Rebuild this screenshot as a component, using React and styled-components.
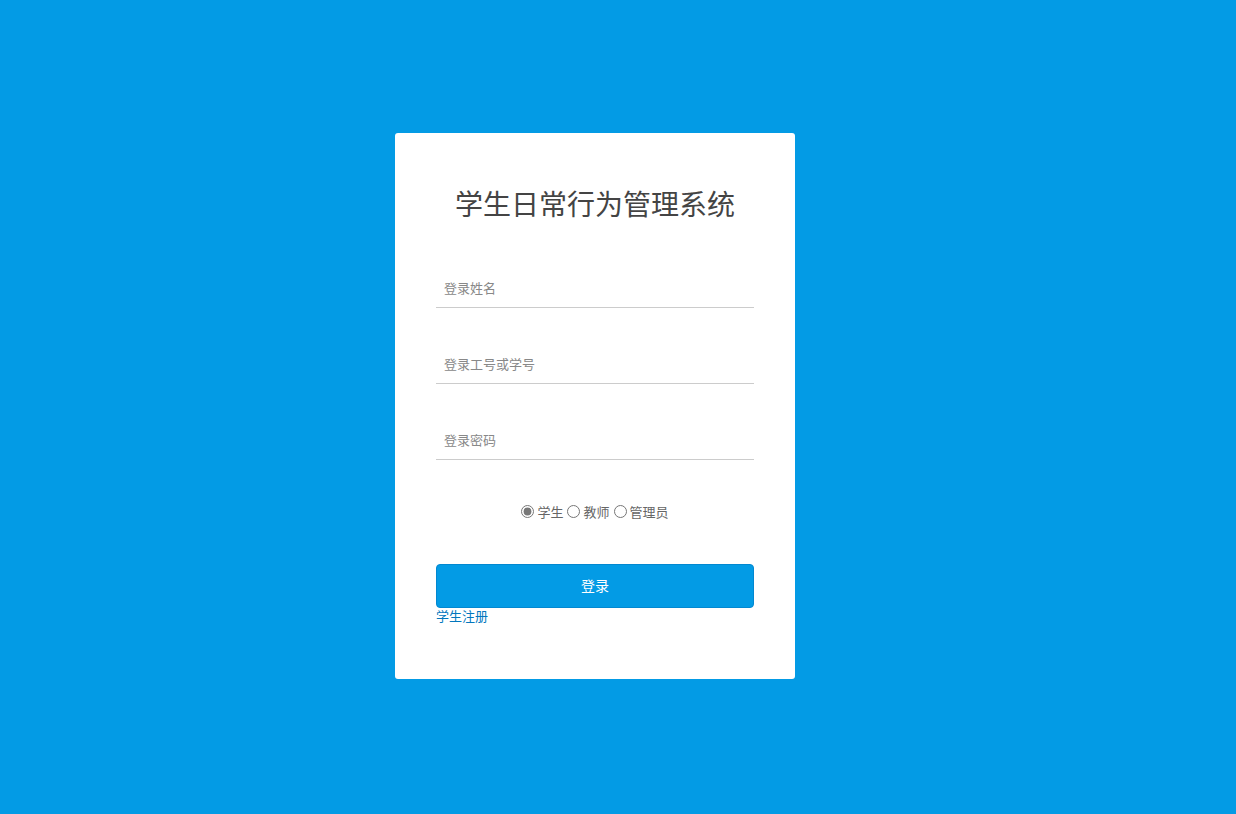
import React, { useState } from "react";
import styled, { createGlobalStyle } from "styled-components";

const Global = createGlobalStyle`
  html, body { margin: 0; padding: 0; }
  body {
    background: #039be5;
    font-family: "Noto Sans CJK SC", "Noto Sans", sans-serif;
    min-height: 814px;
  }
`;

const Page = styled.div`
  display: flex;
  justify-content: center;
  padding: 133px 46px 0 0;
  height: 814px;
  box-sizing: border-box;
`;

const Card = styled.form`
  width: 400px;
  height: 546px;
  box-sizing: border-box;
  background: #fff;
  border-radius: 3px;
  padding: 42px 41px 0;
  display: flex;
  flex-direction: column;
`;

const Title = styled.h1`
  margin: 0;
  font-size: 28px;
  font-weight: 400;
  color: #444;
  text-align: center;
  line-height: 56px;
  margin-bottom: 41px;
`;

const Field = styled.input`
  display: block;
  width: 100%;
  height: 36px;
  box-sizing: border-box;
  border: none;
  border-bottom: 1px solid #ccc;
  outline: none;
  padding: 0 8px 4px;
  font-family: inherit;
  font-size: 13px;
  color: #333;
  margin-bottom: 40px;
  background: transparent;
  &::placeholder { color: #888; }
`;

const RadioRow = styled.div`
  display: flex;
  justify-content: center;
  align-items: center;
  font-size: 13px;
  color: #666;
  margin-top: -3px;
  height: 28px;
`;

const RadioLabel = styled.label`
  display: flex;
  align-items: center;
  cursor: pointer;
`;

const Radio = styled.input`
  margin: 0 3px 0 0;
  width: 13px;
  height: 13px;
  accent-color: #777;
`;

const Spacer = styled.span`
  width: 4px;
`;

const Button = styled.button`
  margin-top: 39px;
  width: 100%;
  height: 44px;
  border: 1px solid #0288d1;
  border-radius: 4px;
  background: #039be5;
  color: #fff;
  font-family: inherit;
  font-size: 14px;
  padding: 0 0 3px;
  cursor: pointer;
`;

const Link = styled.a`
  margin-top: -1px;
  font-size: 13px;
  color: #0277bd;
  text-decoration: none;
  line-height: 18px;
`;

export default function App() {
  const [role, setRole] = useState("student");
  const roles = [
    ["student", "学生"],
    ["teacher", "教师"],
    ["admin", "管理员"],
  ];
  return (
    <>
      <Global />
      <Page>
        <Card onSubmit={(e) => e.preventDefault()}>
          <Title>学生日常行为管理系统</Title>
          <Field placeholder="登录姓名" />
          <Field placeholder="登录工号或学号" />
          <Field type="password" placeholder="登录密码" />
          <RadioRow>
            {roles.map(([v, l], i) => (
              <React.Fragment key={v}>
                {i > 0 && <Spacer />}
                <RadioLabel>
                  <Radio
                    type="radio"
                    name="role"
                    checked={role === v}
                    onChange={() => setRole(v)}
                  />
                  {l}
                </RadioLabel>
              </React.Fragment>
            ))}
          </RadioRow>
          <Button type="submit">登录</Button>
          <Link href="#">学生注册</Link>
        </Card>
      </Page>
    </>
  );
}
